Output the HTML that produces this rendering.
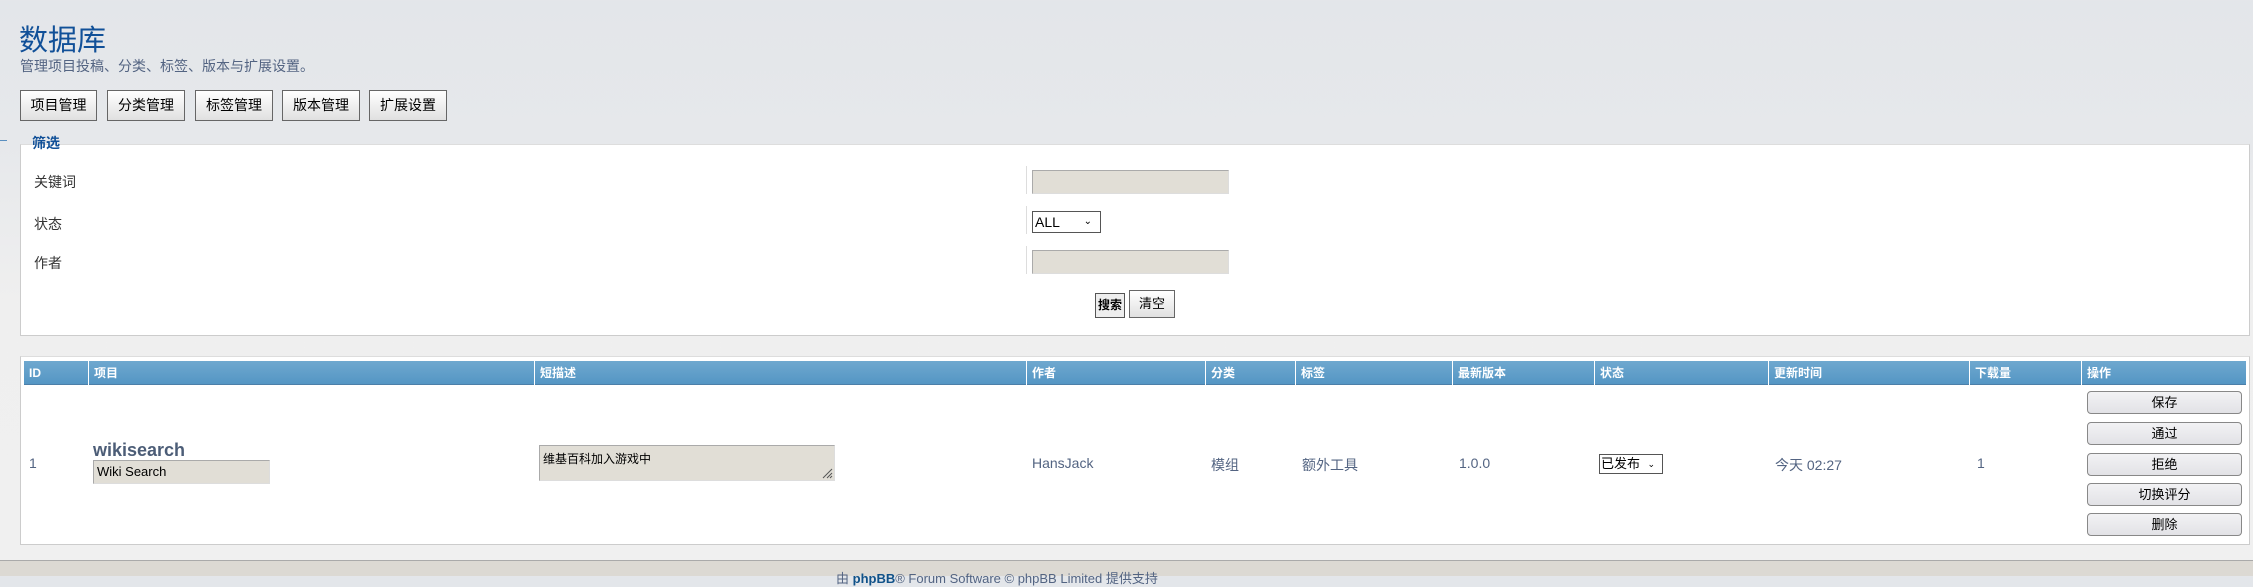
<!DOCTYPE html>
<html><head><meta charset="utf-8"><style>
*{box-sizing:border-box;margin:0;padding:0}
body{width:2253px;height:576px;overflow:hidden;position:relative;font-family:"Liberation Sans","Noto Sans CJK SC",sans-serif;background:linear-gradient(#e3e6ea 0,#e6e8eb 140px,#efefef 300px,#f0f0f0 100%);color:#536482}
.a{position:absolute;white-space:nowrap}
.btn{position:absolute;top:90px;height:31px;border:1px solid #666;background:linear-gradient(#fff,#e0e0e0);color:#000;font-size:14px;text-align:center;line-height:29px}
.box{position:absolute;left:20px;width:2230px;background:#fff;border:1px solid #ccc;border-top-color:#ddd}
.inp{position:absolute;background:#e1ded6;border:1px solid #aaa;border-bottom-color:#ddd;border-right-color:#ddd}
.lbl{position:absolute;left:34px;font-size:14px;color:#333}
.th{position:absolute;top:361px;height:24px;background:linear-gradient(#6fa8cf,#5496c4);border-bottom:1px solid #4c7fa8;color:#fff;font-weight:bold;font-size:12px;line-height:24px;padding-left:5px}
.td{position:absolute;top:455px;font-size:14px;color:#536482}
.ab{position:absolute;left:2087px;width:155px;height:23px;border:1px solid #888;border-radius:4px;background:linear-gradient(#f2f2f4,#e2e2e6);color:#000;font-size:13px;text-align:center;line-height:21px}
</style></head><body>
<div class="a" style="left:0;top:140px;width:7px;height:1px;background:#5a8fc0"></div>
<div class="a" style="left:19px;top:17px;font-size:29px;color:#115098">数据库</div>
<div class="a" style="left:20px;top:56px;font-size:14px;color:#536482">管理项目投稿、分类、标签、版本与扩展设置。</div>
<div class="btn" style="left:20px;width:77px">项目管理</div>
<div class="btn" style="left:107px;width:78px">分类管理</div>
<div class="btn" style="left:195px;width:78px">标签管理</div>
<div class="btn" style="left:282px;width:78px">版本管理</div>
<div class="btn" style="left:369px;width:78px">扩展设置</div>

<div class="box" style="top:144px;height:192px"></div>
<div class="a" style="left:32px;top:133px;font-size:14px;font-weight:bold;color:#115098">筛选</div>
<div class="lbl" style="top:172px">关键词</div>
<div class="lbl" style="top:214px">状态</div>
<div class="lbl" style="top:253px">作者</div>
<div class="a" style="left:1026px;top:166px;width:1px;height:28px;background:#ddd"></div>
<div class="a" style="left:1026px;top:206px;width:1px;height:28px;background:#ddd"></div>
<div class="a" style="left:1026px;top:246px;width:1px;height:28px;background:#ddd"></div>
<div class="inp" style="left:1032px;top:170px;width:197px;height:24px"></div>
<div class="a" style="left:1032px;top:211px;width:69px;height:22px;border:1px solid #555;background:#fff;color:#000;font-size:14px;line-height:20px;padding-left:2px">ALL<span style="position:absolute;right:8px;font-size:10px">⌄</span></div>
<div class="inp" style="left:1032px;top:250px;width:197px;height:24px"></div>
<div class="a" style="left:1095px;top:293px;width:30px;height:25px;border:1px solid #555;background:#eee;color:#000;font-size:12px;font-weight:bold;text-align:center;line-height:23px">搜索</div>
<div class="a" style="left:1129px;top:290px;width:46px;height:28px;border:1px solid #666;background:linear-gradient(#fff,#e0e0e0);color:#000;font-size:13px;text-align:center;line-height:26px">清空</div>

<div class="box" style="top:356px;height:189px"></div>
<div class="th" style="left:24px;width:64px">ID</div>
<div class="th" style="left:89px;width:445px">项目</div>
<div class="th" style="left:535px;width:491px">短描述</div>
<div class="th" style="left:1027px;width:178px">作者</div>
<div class="th" style="left:1206px;width:89px">分类</div>
<div class="th" style="left:1296px;width:156px">标签</div>
<div class="th" style="left:1453px;width:141px">最新版本</div>
<div class="th" style="left:1595px;width:173px">状态</div>
<div class="th" style="left:1769px;width:200px">更新时间</div>
<div class="th" style="left:1970px;width:111px">下载量</div>
<div class="th" style="left:2082px;width:164px">操作</div>

<div class="td" style="left:29px">1</div>
<div class="a" style="left:93px;top:440px;font-size:18px;font-weight:bold;color:#4c5d77">wikisearch</div>
<div class="inp" style="left:93px;top:460px;width:177px;height:24px;color:#000;font-size:13px;line-height:22px;padding-left:3px">Wiki Search</div>
<div class="inp" style="left:539px;top:445px;width:296px;height:36px;color:#000;font-size:12px;padding:4px 3px">维基百科加入游戏中<svg style="position:absolute;right:1px;bottom:1px" width="12" height="12"><path d="M11 2L2 11M11 6L6 11M11 9L9 11" stroke="#555" stroke-width="1"/></svg></div>
<div class="td" style="left:1032px">HansJack</div>
<div class="td" style="left:1211px">模组</div>
<div class="td" style="left:1302px">额外工具</div>
<div class="td" style="left:1459px">1.0.0</div>
<div class="a" style="left:1599px;top:454px;width:64px;height:20px;border:1px solid #555;background:#fff;color:#000;font-size:13px;line-height:18px;padding-left:1px">已发布<span style="position:absolute;right:7px;font-size:9px">⌄</span></div>
<div class="td" style="left:1775px">今天 02:27</div>
<div class="td" style="left:1977px">1</div>
<div class="ab" style="top:391px">保存</div>
<div class="ab" style="top:422px">通过</div>
<div class="ab" style="top:453px">拒绝</div>
<div class="ab" style="top:483px">切换评分</div>
<div class="ab" style="top:513px">删除</div>

<div class="a" style="left:0;top:560px;width:2253px;height:16px;background:#dcd9d3;border-top:1px solid #aaa"></div>
<div class="a" style="left:836px;top:568px;font-size:13px;color:#536482">由 <b style="color:#105289">phpBB</b>® Forum Software © phpBB Limited 提供支持</div>
</body></html>
